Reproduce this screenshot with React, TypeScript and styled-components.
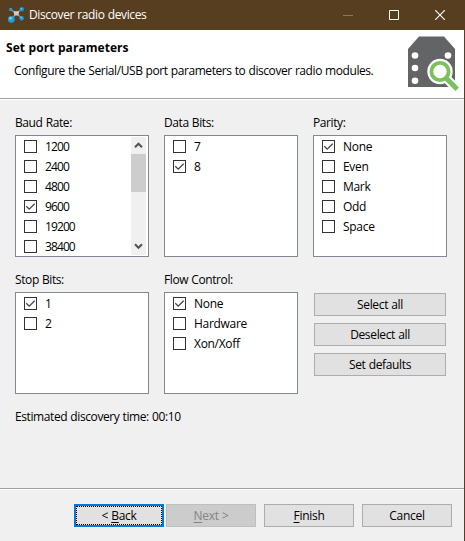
import React from "react";
import styled, { createGlobalStyle } from "styled-components";

const GlobalStyle = createGlobalStyle`
  * { box-sizing: border-box; }
  body { margin: 0; overflow: hidden; }
`;

const Dialog = styled.div`
  width: 465px;
  height: 541px;
  display: flex;
  flex-direction: column;
  background: #f0f0f0;
  border-right: 1px solid #573e20;
  font-family: "Open Sans", "Noto Sans", sans-serif;
  font-size: 12px;
  line-height: 16px;
  color: #000;
  white-space: nowrap;
`;

const Text = styled.span<{ $track?: number }>`
  letter-spacing: ${(p) => p.$track ?? -0.4}px;
  word-spacing: 0.4px;
`;

const TitleBar = styled.header`
  height: 30px;
  flex: none;
  display: flex;
  align-items: center;
  padding: 0 1px 0 7px;
  background: #573e20;
  color: #fff;
`;

const Caption = styled.h1`
  flex: 1;
  margin: 0 0 0 5px;
  font-size: 12px;
  font-weight: 400;
`;

const WindowButton = styled.span`
  width: 46px;
  height: 28px;
  display: flex;
  align-items: center;
  justify-content: center;
`;

const Banner = styled.section`
  height: 68px;
  flex: none;
  display: flex;
  justify-content: space-between;
  padding: 6px 4px 0 6px;
  background: #fff;
`;

const BannerTitle = styled.h2`
  margin: 4px 0 7px;
  font-size: 12px;
  line-height: 16px;
  font-weight: 700;
`;

const BannerText = styled.p`
  margin: 0 0 0 8px;
`;

const Separator = styled.div`
  height: 2px;
  flex: none;
  background: #a0a0a0;
  border-bottom: 1px solid #fff;
`;

const Body = styled.main`
  height: 388px;
  flex: none;
  padding: 15px 17px 0 15px;
`;

const Groups = styled.div`
  display: grid;
  grid-template-columns: 134px 134px 134px;
  column-gap: 15px;
  row-gap: 15px;
`;

const Label = styled.div`
  height: 20px;
`;

const ListBox = styled.div<{ $height: number }>`
  height: ${(p) => p.$height}px;
  display: flex;
  justify-content: space-between;
  overflow: hidden;
  border: 1px solid #828790;
  background: #fff;
`;

const Items = styled.div`
  padding-top: 1px;
`;

const Item = styled.div`
  height: 20px;
  display: flex;
  align-items: center;
  gap: 8px;
  padding: 0 0 1px 8px;
`;

const CheckBox = styled.span`
  width: 13px;
  height: 13px;
  display: flex;
  border: 1px solid #333;
  background: #fff;
`;

const ScrollBar = styled.div`
  width: 15px;
  height: 118px;
  margin: 1px 2px 0 0;
  display: flex;
  flex-direction: column;
  background: #f0f0f0;
`;

const Arrow = styled.span`
  height: 17px;
  display: flex;
  align-items: center;
  justify-content: center;
`;

const Thumb = styled.span`
  height: 38px;
  margin-bottom: auto;
  background: #cdcdcd;
`;

const Actions = styled.div`
  display: flex;
  flex-direction: column;
  gap: 7px;
  padding: 21px 1px 0;
`;

const Button = styled.button<{ $focused?: boolean }>`
  width: 100%;
  height: 23px;
  padding: 0;
  border: ${(p) => (p.$focused ? "2px solid #0078d7" : "1px solid #adadad")};
  ${(p) => p.$focused && "outline: 1px dotted #000; outline-offset: -3px;"}
  background: #e1e1e1;
  color: #000;
  font: inherit;
  line-height: ${(p) => (p.$focused ? 19 : 21)}px;

  &:disabled {
    border-color: #bfbfbf;
    background: #ccc;
    color: #838383;
  }
`;

const Estimate = styled.div`
  margin-top: 15px;
`;

const Footer = styled.footer`
  display: grid;
  grid-template-columns: 182px 90px 90px;
  padding: 14px 12px 0 74px;
  column-gap: 8px;
`;

const Pair = styled.div`
  display: grid;
  grid-template-columns: 90px 90px;
  gap: 2px;
`;

const Key = styled.span`
  text-decoration: underline;
  text-decoration-thickness: 1px;
  text-underline-offset: 2px;
`;

const AppIcon = () => (
  <svg width="17" height="17" viewBox="0 0 17 17">
    <path d="M3.7 2.5 9 6.2 15 2M4.3 12 9.3 6.5 14.7 11" stroke="#8b979d" strokeWidth="1.2" fill="none" />
    <path d="M6.5 4.2h5.6l-.6 4.4H7.4z" fill="#cfcdcb" />
    <circle cx="3.7" cy="2.4" r="1.7" fill="#2a9fd0" />
    <circle cx="14.8" cy="2.3" r="2.2" fill="#1f93c8" />
    <circle cx="4.3" cy="12.3" r="3.4" fill="#219fdb" />
    <circle cx="14.7" cy="11.2" r="2.2" fill="#1d98d0" />
    <circle cx="3.6" cy="11.2" r="1.3" fill="#7fd2f5" />
    <circle cx="14.3" cy="1.8" r=".8" fill="#80d3f4" />
    <circle cx="14.2" cy="10.6" r=".8" fill="#80d3f4" />
  </svg>
);

const ModuleIcon = () => (
  <svg width="52" height="56" viewBox="0 0 52 56">
    <path d="M0 51V13L11 .5h25L47 13v38z" fill="#636466" />
    <g fill="#fff">
      <circle cx="7" cy="19.5" r="3.3" />
      <circle cx="7" cy="32" r="3.3" />
      <circle cx="7" cy="44.7" r="3.3" />
      <circle cx="40" cy="19.5" r="3.3" />
      <circle cx="32" cy="35.5" r="12.7" />
    </g>
    <path d="m38 42 12 12" stroke="#fff" strokeWidth="9" />
    <path d="m38 42 11.2 11.2" stroke="#7ac15b" strokeWidth="5" />
    <circle cx="32" cy="35.5" r="8.6" fill="#fff" stroke="#7ac15b" strokeWidth="3.8" />
  </svg>
);

const Tick = () => (
  <svg width="11" height="11" viewBox="0 0 11 11">
    <path d="m1.3 5.3 2.9 2.9 5.5-5.5" stroke="#444" strokeWidth="1.3" fill="none" />
  </svg>
);

const Chevron = ({ down = false }: { down?: boolean }) => (
  <svg width="9" height="7" viewBox="0 0 9 7">
    <path d={down ? "m1 1.2 3.5 3.5L8 1.2" : "M1 5.2l3.5-3.5L8 5.2"} stroke="#555" strokeWidth="2.1" fill="none" />
  </svg>
);

interface GroupProps {
  label: string;
  options: string[];
  checked: string;
  height: number;
  scroll?: boolean;
}

const Group = ({ label, options, checked, height, scroll }: GroupProps) => (
  <div>
    <Label><Text>{label}</Text></Label>
    <ListBox $height={height}>
      <Items>
        {options.map((option) => (
          <Item key={option}>
            <CheckBox>{option === checked && <Tick />}</CheckBox>
            <Text $track={/^\d/.test(option) ? -0.9 : -0.3}>{option}</Text>
          </Item>
        ))}
      </Items>
      {scroll && (
        <ScrollBar>
          <Arrow><Chevron /></Arrow>
          <Thumb />
          <Arrow><Chevron down /></Arrow>
        </ScrollBar>
      )}
    </ListBox>
  </div>
);

export default function App() {
  return (
    <>
      <GlobalStyle />
      <Dialog>
        <TitleBar>
          <AppIcon />
          <Caption><Text $track={-0.37}>Discover radio devices</Text></Caption>
          <WindowButton>
            <svg width="10" height="10"><path d="M0 5.5h10" stroke="#89785f" /></svg>
          </WindowButton>
          <WindowButton>
            <svg width="10" height="10"><path d="M.5.5h9v9h-9z" stroke="#fff" fill="none" /></svg>
          </WindowButton>
          <WindowButton>
            <svg width="10" height="10"><path d="m0 0 10 10M10 0 0 10" stroke="#fff" strokeWidth="1.1" /></svg>
          </WindowButton>
        </TitleBar>
        <Banner>
          <div>
            <BannerTitle><Text $track={0.04}>Set port parameters</Text></BannerTitle>
            <BannerText>
              <Text $track={-0.42}>Configure the Serial/USB port parameters to discover radio modules.</Text>
            </BannerText>
          </div>
          <ModuleIcon />
        </Banner>
        <Separator />
        <Body>
          <Groups>
            <Group label="Baud Rate:" options={["1200", "2400", "4800", "9600", "19200", "38400"]} checked="9600" height={122} scroll />
            <Group label="Data Bits:" options={["7", "8"]} checked="8" height={122} />
            <Group label="Parity:" options={["None", "Even", "Mark", "Odd", "Space"]} checked="None" height={122} />
            <Group label="Stop Bits:" options={["1", "2"]} checked="1" height={102} />
            <Group label="Flow Control:" options={["None", "Hardware", "Xon/Xoff"]} checked="None" height={102} />
            <Actions>
              <Button><Text $track={-0.35}>Select all</Text></Button>
              <Button><Text $track={-0.35}>Deselect all</Text></Button>
              <Button><Text $track={-0.35}>Set defaults</Text></Button>
            </Actions>
          </Groups>
          <Estimate><Text>Estimated discovery time: 00:10</Text></Estimate>
        </Body>
        <Separator />
        <Footer>
          <Pair>
            <Button $focused><Text $track={-0.3}>&lt; <Key>B</Key>ack</Text></Button>
            <Button disabled><Text $track={-0.3}><Key>N</Key>ext &gt;</Text></Button>
          </Pair>
          <Button><Text $track={-0.3}><Key>F</Key>inish</Text></Button>
          <Button><Text $track={-0.3}>Cancel</Text></Button>
        </Footer>
      </Dialog>
    </>
  );
}
